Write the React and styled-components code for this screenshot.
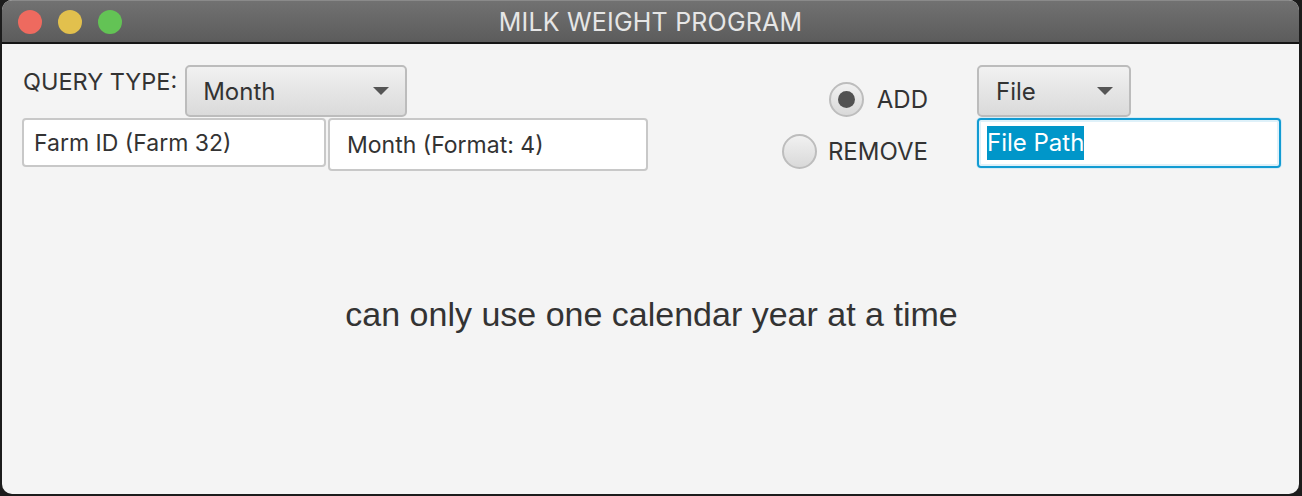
import React from "react";
import styled, { createGlobalStyle } from "styled-components";

const Global = createGlobalStyle`
  html, body { margin: 0; padding: 0; background: #1c1c1c; }
  body { font-family: Inter, "Open Sans", sans-serif; }
  * { box-sizing: border-box; }
`;

const Window = styled.div`
  width: 1297px;
  height: 494px;
  margin-left: 2px;
  border-radius: 10px;
  overflow: hidden;
  background: #f4f4f4;
  display: flex;
  flex-direction: column;
`;

const TitleBar = styled.div`
  height: 44px;
  flex: none;
  display: grid;
  grid-template-columns: 1fr auto 1fr;
  align-items: center;
  background: linear-gradient(#717171, #5c5c5c);
  border-top: 1px solid #8a8a8a;
  border-bottom: 2px solid #151515;
`;

const Lights = styled.div`
  display: flex;
  gap: 16px;
  padding-left: 16px;
`;

const Light = styled.span`
  width: 24px;
  height: 24px;
  border-radius: 50%;
  background: ${(p) => p.$c};
`;

const Title = styled.div`
  font-size: 25px;
  color: #e6e6e6;
  letter-spacing: 0.2px;
  line-height: 30px;
`;

const Content = styled.div`
  flex: 1;
  padding: 21px 18px 0 20px;
  display: flex;
  flex-direction: column;
  color: #333;
`;

const TopRow = styled.div`
  display: flex;
  align-items: flex-start;
`;

const QueryPanel = styled.div`
  display: flex;
  flex-direction: column;
`;

const Row = styled.div`
  display: flex;
  align-items: flex-start;
  gap: ${(p) => p.$gap || 0}px;
  margin-top: ${(p) => p.$mt || 0}px;
`;

const Label = styled.div`
  font-size: 23.5px;
  line-height: 28px;
  margin-top: 3px;
  margin-left: 1px;
  margin-right: 8px;
`;

const Combo = styled.div`
  width: ${(p) => p.$w}px;
  height: 52px;
  border: 2px solid #bcbcbc;
  border-radius: 5px;
  background: linear-gradient(#f1f1f1, #dadada);
  display: flex;
  align-items: center;
  justify-content: space-between;
  padding: 0 16px 0 ${(p) => p.$pl}px;
  font-size: 24px;
`;

const Arrow = styled.span`
  width: 0;
  height: 0;
  border-left: 8px solid transparent;
  border-right: 8px solid transparent;
  border-top: 8px solid #555;
`;

const Field = styled.div`
  width: ${(p) => p.$w}px;
  height: ${(p) => p.$h}px;
  background: #fff;
  border: 2px solid #c8c8c8;
  border-radius: 4px;
  display: flex;
  align-items: center;
  padding-left: ${(p) => p.$pl}px;
  font-size: 23px;
`;

const FocusField = styled(Field)`
  border: 2px solid #129bd2;
  box-shadow: inset 0 0 0 2px #dff1f9, 0 0 0 1px #d6ecf6;
  font-size: 24px;
`;

const Selected = styled.span`
  background: #0096c9;
  color: #fff;
  line-height: 34px;
`;

const RadioGroup = styled.div`
  margin-left: auto;
  margin-top: 17px;
  display: flex;
  flex-direction: column;
  align-items: flex-end;
  gap: 17px;
`;

const RadioRow = styled.div`
  display: flex;
  align-items: center;
  gap: ${(p) => p.$gap}px;
  font-size: 24px;
  height: 35px;
`;

const RadioCircle = styled.span`
  width: 35px;
  height: 35px;
  border-radius: 50%;
  border: 2px solid #bdbdbd;
  background: linear-gradient(#f1f1f1, #d9d9d9);
  display: flex;
  align-items: center;
  justify-content: center;
  &::after {
    content: "";
    width: 17px;
    height: 17px;
    border-radius: 50%;
    background: #525252;
    display: ${(p) => (p.$on ? "block" : "none")};
  }
`;

const FileGroup = styled.div`
  margin-left: 49px;
  display: flex;
  flex-direction: column;
  gap: 1px;
`;

const Message = styled.div`
  margin-top: 124px;
  text-align: center;
  font-family: "Liberation Sans", Arial, sans-serif;
  font-size: 34px;
  line-height: 39px;
  color: #333;
`;

export default function App() {
  return (
    <>
      <Global />
      <Window>
        <TitleBar>
          <Lights>
            <Light $c="#ee6a5f" />
            <Light $c="#e2c04d" />
            <Light $c="#63c355" />
          </Lights>
          <Title>MILK WEIGHT PROGRAM</Title>
          <div />
        </TitleBar>
        <Content>
          <TopRow>
            <QueryPanel>
              <Row>
                <Label>QUERY TYPE:</Label>
                <Combo $w={222} $pl={16}>
                  <span>Month</span>
                  <Arrow />
                </Combo>
              </Row>
              <Row $gap={2} $mt={1}>
                <Field $w={304} $h={49} $pl={10}>Farm ID (Farm 32)</Field>
                <Field $w={320} $h={53} $pl={17}>Month (Format: 4)</Field>
              </Row>
            </QueryPanel>
            <RadioGroup>
              <RadioRow $gap={13}>
                <RadioCircle $on />
                <span>ADD</span>
              </RadioRow>
              <RadioRow $gap={11}>
                <RadioCircle />
                <span>REMOVE</span>
              </RadioRow>
            </RadioGroup>
            <FileGroup>
              <Combo $w={154} $pl={17}>
                <span>File</span>
                <Arrow />
              </Combo>
              <FocusField $w={304} $h={50} $pl={8}>
                <Selected>File Path</Selected>
              </FocusField>
            </FileGroup>
          </TopRow>
          <Message>can only use one calendar year at a time</Message>
        </Content>
      </Window>
    </>
  );
}
